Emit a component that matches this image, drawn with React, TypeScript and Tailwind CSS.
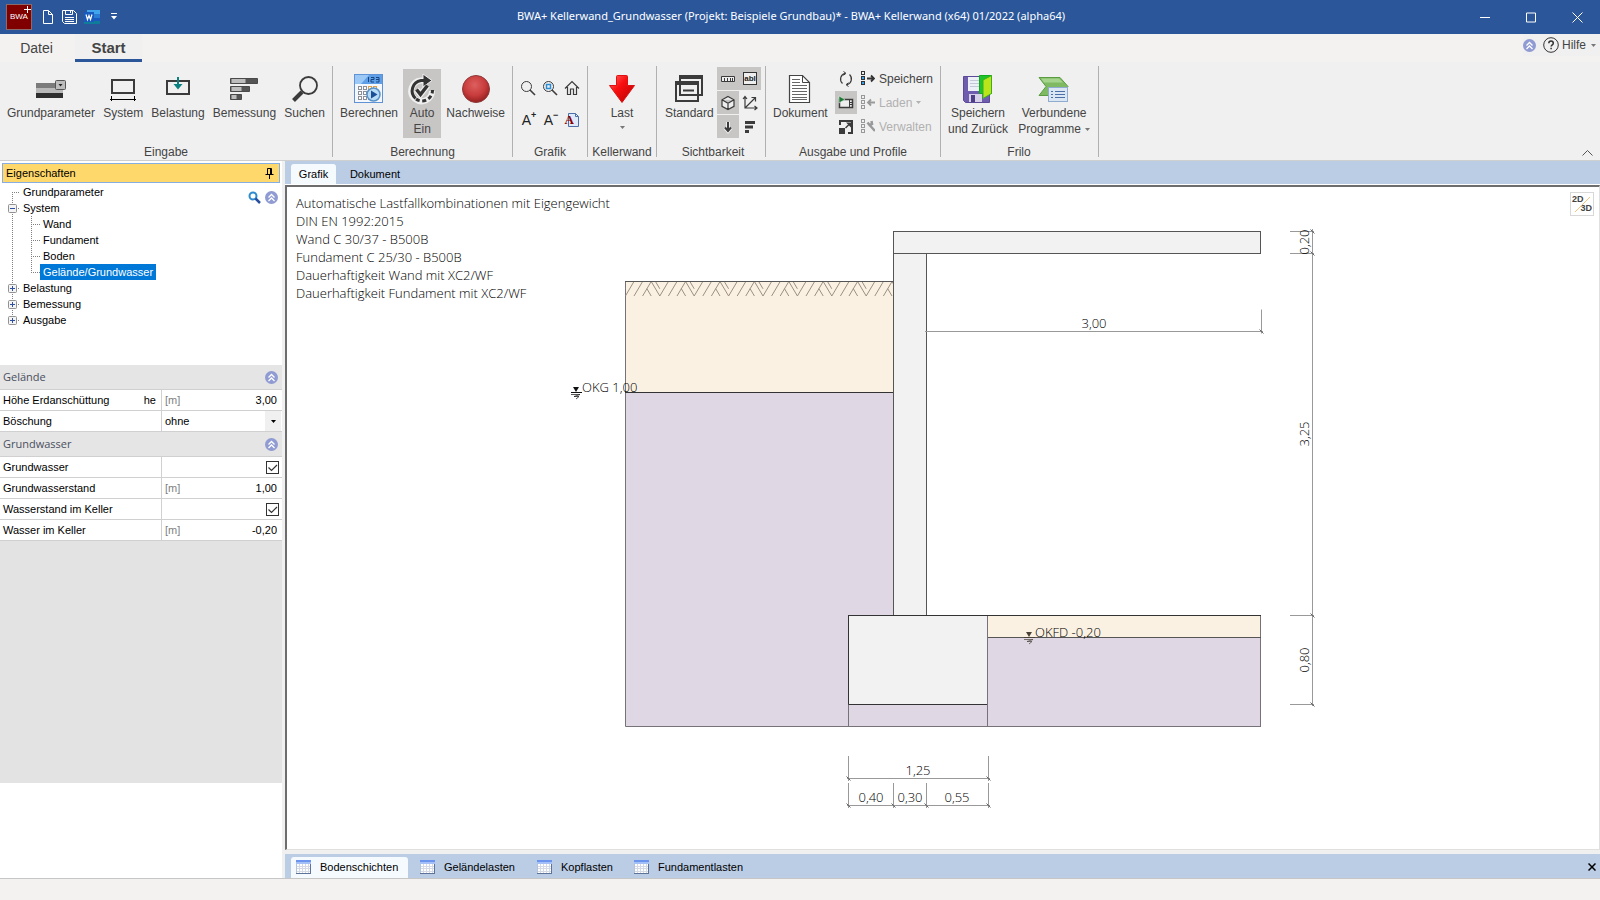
import React, { useState } from "react";

const ARIAL = "font-['Liberation_Sans',Arial,sans-serif]";
const SEGOE = "font-['Open_Sans','Noto_Sans',sans-serif]";

export default function App() {
  return (
    <div
      className={`flex h-screen flex-col overflow-hidden bg-[#f0f0f0] text-[#444] ${ARIAL}`}
    >
      <TitleBar />
      <RibbonTabs />
      <Ribbon />
      <div className="flex min-h-0 flex-1">
        <Sidebar />
        <Workspace />
      </div>
      <footer className="h-[22px] shrink-0 border-t border-[#c6c6c6] bg-[#f3f2f1]" />
    </div>
  );
}

function TitleBar() {
  return (
    <header className="flex h-[34px] shrink-0 items-center bg-[#2b579a] text-white">
      <div className="flex w-[120px] items-center pl-[6px]">
        <div className="relative flex size-[26px] items-center justify-center border border-[#8a6a6a] bg-[#800000]">
          <span className="text-[8px] leading-none">BWA</span>
          <svg
            className="absolute top-0 right-0"
            width="8"
            height="8"
            stroke="#fff"
            strokeWidth="1"
          >
            <path d="M1 4.500h7M4.500 1v7" />
          </svg>
        </div>
        <button aria-label="Neu" className="ml-[10px]">
          <svg width="12" height="16" fill="none" stroke="#fff">
            <path d="M1.500 1.500h5l4 4v9h-9zM6.500 1.500v4h4" />
          </svg>
        </button>
        <button aria-label="Speichern" className="ml-[8px]">
          <svg width="15" height="16" fill="none" stroke="#fff">
            <path d="M.5 1.500h11l3 3v10H2.500l-2-2zM3.500 1.500v4h7v-4M8.500 2v2M3 8.500h9M3 10.500h9M3 12.500h9" />
          </svg>
        </button>
        <button aria-label="Word" className="ml-[7px]">
          <svg width="16" height="16">
            <rect x="3" y="1" width="13" height="4" fill="#41a5ee" />
            <rect x="3" y="5" width="13" height="4" fill="#2b7cd3" />
            <rect x="3" y="9" width="13" height="3" fill="#185abd" />
            <rect x="0" y="12" width="16" height="3" fill="#0f7d9a" />
            <rect x="0" y="3" width="10" height="10" fill="#185abd" />
            <path
              d="M2 5.500l1.500 5L5 6.500l1.500 4 1.500-5"
              fill="none"
              stroke="#fff"
              strokeWidth="1.200"
            />
          </svg>
        </button>
        <button aria-label="Anpassen" className="ml-[11px]">
          <svg width="6" height="8" fill="#fff">
            <path d="M0 0h6v1H0zM0 3h6L3 6.500z" />
          </svg>
        </button>
      </div>
      <h1 className="flex-1 pb-[2px] text-center font-['Noto_Sans',sans-serif] text-[11px] leading-4 whitespace-nowrap">
        BWA+ Kellerwand_Grundwasser (Projekt: Beispiele Grundbau)* - BWA+
        Kellerwand (x64) 01/2022 (alpha64)
      </h1>
      <div className="flex">
        <WindowButton label="Minimieren" d="M0 5.500h10" />
        <WindowButton label="Maximieren" d="M.5 1h9v9h-9z" />
        <WindowButton label="Schließen" d="M.5.5l10 10M10.500.5l-10 10" />
      </div>
    </header>
  );
}

function WindowButton({ label, d }: { label: string; d: string }) {
  return (
    <button
      aria-label={label}
      className="flex h-[34px] w-[46px] items-center justify-center"
    >
      <svg width="11" height="11" fill="none" stroke="#fff">
        <path d={d} />
      </svg>
    </button>
  );
}

function RoundChevron() {
  return (
    <svg width="13" height="13" viewBox="0 0 13 13">
      <circle cx="6.500" cy="6.500" r="6.500" fill="#8f9bd2" />
      <path
        d="M3.500 6.500l3-3 3 3M3.500 10l3-3 3 3"
        fill="none"
        stroke="#fff"
        strokeWidth="1.300"
      />
    </svg>
  );
}

function Caret({ color = "#777" }: { color?: string }) {
  return (
    <svg width="5" height="3" fill={color}>
      <path d="M0 0h5L2.500 3z" />
    </svg>
  );
}

function RibbonTabs() {
  return (
    <nav className="flex h-7 shrink-0 bg-[#f3f2f1]">
      <button className="w-[73px] text-sm">Datei</button>
      <button className="ml-[2px] w-[67px] border-b-[3px] border-[#2b579a] bg-[#f0f0f0] pt-[3px] text-[15px] font-bold">
        Start
      </button>
      <div className="ml-auto flex h-[22px] items-center bg-[#f0f0f0] pr-1 text-xs">
        <button aria-label="Einklappen" className="mr-[7px]">
          <RoundChevron />
        </button>
        <button className="flex items-center">
          <svg width="16" height="16" fill="none" stroke="#333">
            <circle cx="8" cy="8" r="7.300" />
            <path
              d="M5.800 6.200c0-3 4.500-3 4.500 0 0 1.600-2.200 1.700-2.200 3.400M8.100 10.800v1.400"
              strokeWidth="1.500"
            />
          </svg>
          <span className="mr-[5px] ml-[3px]">Hilfe</span>
          <Caret />
        </button>
      </div>
    </nav>
  );
}

type GroupProps = {
  title: string;
  className: string;
  children: React.ReactNode;
};

function Group({ title, className, children }: GroupProps) {
  return (
    <>
      <section className={`flex flex-col ${className}`}>
        <div className="flex flex-1 items-start justify-between pt-[7px]">
          {children}
        </div>
        <h2 className="text-center leading-4 whitespace-nowrap">{title}</h2>
      </section>
      <div className="mt-1 mb-[3px] w-px bg-[#b1b1b1]" />
    </>
  );
}

type BigButtonProps = {
  icon: React.ReactNode;
  active?: boolean;
  className?: string;
  children: React.ReactNode;
};

function BigButton({ icon, active, className, children }: BigButtonProps) {
  return (
    <button
      className={`flex h-[69px] flex-col items-center pt-1 leading-4 whitespace-nowrap ${
        active ? "bg-[#c8c6c4]" : ""
      } ${className ?? ""}`}
    >
      <span className="flex h-8 items-center">{icon}</span>
      {children}
    </button>
  );
}

type SmallButtonProps = {
  label: string;
  active?: boolean;
  children: React.ReactNode;
};

function SmallButton({ label, active, children }: SmallButtonProps) {
  return (
    <button
      aria-label={label}
      className={`flex h-[23px] w-[22px] items-center justify-center ${
        active ? "bg-[#c8c6c4]" : ""
      }`}
    >
      <svg width="16" height="16" fill="none" stroke="#3b3b3b">
        {children}
      </svg>
    </button>
  );
}

function Ribbon() {
  return (
    <div className="flex h-[99px] shrink-0 border-b border-[#cfcfcf] text-xs">
      <Group title="Eingabe" className="w-[332px] px-[7px]">
        <BigButton icon={<GrundparameterIcon />}>Grundparameter</BigButton>
        <BigButton icon={<SystemIcon />}>System</BigButton>
        <BigButton icon={<BelastungIcon />}>Belastung</BigButton>
        <BigButton icon={<BemessungIcon />}>Bemessung</BigButton>
        <BigButton icon={<SuchenIcon />}>Suchen</BigButton>
      </Group>

      <Group title="Berechnung" className="w-[179px] px-[7px]">
        <BigButton icon={<BerechnenIcon />}>Berechnen</BigButton>
        <BigButton icon={<AutoIcon />} active className="w-[38px]">
          <span>Auto</span>
          <span>Ein</span>
        </BigButton>
        <BigButton icon={<NachweiseIcon />}>Nachweise</BigButton>
      </Group>

      <Group title="Grafik" className="w-[74px] px-1">
        <div className="mt-[7px] grid w-full grid-cols-3 gap-y-[9px]">
          <SmallButton label="Zoom">
            <circle cx="6.500" cy="6.500" r="5" />
            <path d="M10 10l5 5" strokeWidth="1.600" />
          </SmallButton>
          <SmallButton label="Zoom Fenster">
            <circle cx="6.500" cy="6.500" r="5" />
            <rect x="4.500" y="4.500" width="4" height="4" stroke="#2a8dd4" strokeWidth="1.500" />
            <path d="M10 10l5 5" strokeWidth="1.600" />
          </SmallButton>
          <SmallButton label="Gesamtansicht">
            <path d="M1 8.500L8 1.500l7 7M3.500 7v7.500h3V9h3v5.500h3V7" strokeWidth="1.200" />
          </SmallButton>
          <button className="flex h-[23px] w-[22px] items-center justify-center pl-[2px] text-sm leading-none text-[#222]">
            A<sup className="text-[9px] leading-none font-bold">+</sup>
          </button>
          <button className="flex h-[23px] w-[22px] items-center justify-center pl-[2px] text-sm leading-none text-[#222]">
            A<sup className="text-[9px] leading-none font-bold">−</sup>
          </button>
          <button className="flex h-[23px] w-[22px] items-center justify-center">
            <span className="relative flex">
              <svg width="15" height="16" fill="#dfe9f8" stroke="#4d6fa8">
                <path d="M3.500 1.500h7l3 3v10h-10zM10.500 1.500v3h3" />
              </svg>
              <span className="absolute top-0 left-0 font-['Liberation_Serif',serif] text-[13px] leading-4 font-bold text-[#8b0000]">
                A
              </span>
            </span>
          </button>
        </div>
      </Group>

      <Group title="Kellerwand" className="w-[68px]">
        <BigButton icon={<LastIcon />} className="w-full">
          <span>Last</span>
          <span className="mt-[5px]">
            <Caret />
          </span>
        </BigButton>
      </Group>

      <Group title="Sichtbarkeit" className="w-[108px] pr-[4px] pl-[8px]">
        <BigButton icon={<StandardIcon />}>Standard</BigButton>
        <div className="-mt-[2px] grid grid-cols-2 gap-y-px">
          <SmallButton label="Bemaßung" active>
            <path d="M1.500 5.500h13v5h-13z" fill="#eee" />
            <path d="M4.500 7v3M7.500 7v3M10.500 7v3M12.500 7v3" />
          </SmallButton>
          <button className="flex h-[23px] w-[22px] items-center justify-center bg-[#c8c6c4]">
            <span className="flex h-[13px] w-[14px] items-center justify-center border border-[#333] bg-[#eee] text-[8px] leading-none font-bold text-[#222]">
              abl
            </span>
          </button>
          <SmallButton label="3D Ansicht" active>
            <path
              d="M8 1.500l6 3.300v6.500l-6 3.300-6-3.300V4.800zM2 4.800l6 3.400 6-3.400M8 8.200v6.400"
              fill="#eee"
              strokeWidth="1.200"
            />
          </SmallButton>
          <SmallButton label="Koordinaten">
            <path d="M3 1.500v11.500h12M3 13L13 3M9.500 2.500H13.500v4M1 4l2-2.500L5 4M12.500 11l2.500 2-2.500 2" strokeWidth="1.200" />
          </SmallButton>
          <SmallButton label="Lasten" active>
            <path d="M8 3v9M5 8.500l3 3.500 3-3.500" stroke="#eee" strokeWidth="4" />
            <path d="M8 3v9M5 8.500l3 3.500 3-3.500" strokeWidth="2" />
          </SmallButton>
          <SmallButton label="Ergebnisse">
            <path d="M3 3.500h10M3 8h8M3 12.500h4" strokeWidth="3" />
          </SmallButton>
        </div>
      </Group>

      <Group title="Ausgabe und Profile" className="w-[174px] px-[7px]">
        <BigButton icon={<DokumentIcon />}>Dokument</BigButton>
        <div className="-mt-[2px] grid grid-cols-[22px_auto] items-center gap-x-1 gap-y-px">
          <SmallButton label="Aktualisieren">
            <path d="M7 2.300A6 6 0 0 0 4.500 12.500M9 13.700A6 6 0 0 0 11.500 3.500" strokeWidth="1.200" />
            <path d="M5.500.5l2.500 1.800-2.500 2M10.500 15.500L8 13.700l2.500-2" />
          </SmallButton>
          <ProfileButton mode="save">Speichern</ProfileButton>
          <SmallButton label="Film" active>
            <path d="M1.500 4.500h13v8h-13z" fill="#eee" strokeWidth="1.500" />
            <path d="M11.500 5v7M11.500 7.500h3M11.500 9.500h3" />
            <path d="M1 1v7l6-3.500z" fill="#1e7b34" stroke="#eee" strokeWidth=".5" />
          </SmallButton>
          <ProfileButton mode="load">Laden</ProfileButton>
          <SmallButton label="Vergrößern">
            <path d="M2 6V2h12v12h-4" strokeWidth="2" />
            <path d="M1 9h6v6H1zM8 3.500h5v5z" fill="#3b3b3b" stroke="none" />
            <path d="M7.500 9L11 5.500" strokeWidth="1.500" />
          </SmallButton>
          <ProfileButton mode="manage">Verwalten</ProfileButton>
        </div>
      </Group>

      <Group title="Frilo" className="w-[157px] pr-[8px] pl-[7px]">
        <BigButton icon={<SaveBackIcon />}>
          <span>Speichern</span>
          <span>und Zurück</span>
        </BigButton>
        <BigButton icon={<VerbundeneIcon />}>
          <span>Verbundene</span>
          <span className="flex items-center gap-1">
            Programme <Caret />
          </span>
        </BigButton>
      </Group>

      <button aria-label="Menüband ausblenden" className="mt-auto mr-[7px] mb-1 ml-auto">
        <svg width="11" height="6" fill="none" stroke="#555">
          <path d="M.5 5.500l5-5 5 5" />
        </svg>
      </button>
    </div>
  );
}

const profileArrows = {
  save: "M6 7.500h7M10 4.500l3 3-3 3",
  load: "M14 7.500H7M10 4.500l-3 3 3 3",
  manage: "M9 6.500l5 5.500M6.500 3.500l2 2.500 2.500-1-.5-3",
};

function ProfileButton({
  mode,
  children,
}: {
  mode: "save" | "load" | "manage";
  children: React.ReactNode;
}) {
  const enabled = mode === "save";
  const ink = enabled ? "#333" : "#999";
  return (
    <button
      disabled={!enabled}
      className={`flex h-[23px] items-center gap-1 ${
        enabled ? "" : "text-[#b1b1b1]"
      }`}
    >
      <svg width="14" height="15" stroke={ink} fill="none">
        <rect x=".5" y=".5" width="3" height="3" />
        <rect x=".5" y="5.500" width="3" height="3" fill={enabled ? "#3aa0e8" : "none"} />
        <rect x=".5" y="10.500" width="3" height="3" fill={enabled ? "#3aa0e8" : "none"} />
        <path d={profileArrows[mode]} strokeWidth={mode === "manage" ? 2.5 : 1.8} />
      </svg>
      {children}
      {mode === "load" && <Caret color="#b1b1b1" />}
    </button>
  );
}

/* ---------- ribbon icons ---------- */

function GrundparameterIcon() {
  return (
    <svg width="32" height="20">
      <rect x="1" y="4" width="27" height="5" fill="#7b7b7b" />
      <rect x="1" y="9" width="27" height="5" fill="#b9b9b9" />
      <rect x="1" y="14" width="27" height="5" fill="#2f2f2f" />
      <rect x="20.500" y="1.500" width="10" height="9" rx="1" fill="#bdbdbd" stroke="#555" />
      <path d="M23.500 5h4L25.500 7.500z" fill="#222" />
    </svg>
  );
}

function SystemIcon() {
  return (
    <svg width="28" height="24" fill="none">
      <rect x="3" y="3" width="22" height="13" stroke="#3b3b3b" strokeWidth="2" />
      <path d="M1 22.500h26M2.500 19v5M25.500 19v5" stroke="#000" />
    </svg>
  );
}

function BelastungIcon() {
  return (
    <svg width="26" height="26" fill="none" className="mb-2">
      <rect x="2" y="9" width="22" height="13" stroke="#3b3b3b" strokeWidth="2" />
      <path d="M13 5v8" stroke="#0b8080" strokeWidth="2" />
      <path d="M8.500 12h9L13 17.500z" fill="#0b8080" />
    </svg>
  );
}

function BemessungIcon() {
  return (
    <svg width="28" height="24" stroke="#4a4a4a">
      <path d="M.5 1.500h27v5H.5zM.5 9.500h19v5H.5zM.5 17.500h11v5H.5z" fill="#555" />
      <path d="M1.500 2h14v4h-14zM1.500 10h10v4h-10zM1.500 18h5v4h-5z" fill="#bdbdbd" stroke="none" />
    </svg>
  );
}

function SuchenIcon() {
  return (
    <svg width="28" height="28" fill="none" stroke="#3b3b3b">
      <circle cx="17.500" cy="10.500" r="8.500" strokeWidth="1.800" />
      <path d="M11 17l-8.500 8.500" strokeWidth="4" />
    </svg>
  );
}

function BerechnenIcon() {
  return (
    <svg width="30" height="30">
      <rect x=".5" y=".5" width="28" height="28" fill="#f4f8fd" stroke="#5f93d6" />
      <rect x="1" y="1" width="27" height="9" fill="#5f9fe8" />
      <path d="M1 1h14L7 10H1z" fill="#9cc8f5" />
      <path
        d="M14.500 3v5M17 3.500h3v2h-3v2.500h3M22 3.500h3v4.500h-3M22 5.500h3"
        fill="none"
        stroke="#17447f"
      />
      {[12, 17, 22].map((y) =>
        [4, 9, 14, 19].map((x) => (
          <rect
            key={`${x}-${y}`}
            x={x + 0.5}
            y={y + 0.5}
            width="3"
            height="3"
            fill="#fff"
            stroke={y === 12 && x > 10 ? "#e0a14a" : "#8a8f98"}
          />
        ))
      )}
      <circle cx="19.500" cy="20.500" r="6.500" fill="#b9dcf6" stroke="#5a92c8" strokeWidth="1.500" />
      <path d="M17 16.500v8l6.500-4z" fill="#1c4f95" />
    </svg>
  );
}

function AutoIcon() {
  return (
    <svg width="30" height="32" fill="none">
      <g stroke="#f0f0f0" strokeWidth="6">
        <path d="M8 26A10.500 10.500 0 0 1 14 7.500h3M8 26a10.500 10.500 0 0 0 17-8" />
        <path d="M9.500 16.500l4 5 7-9" />
      </g>
      <path d="M16 1v13l9-6.500z" fill="#333" stroke="#f0f0f0" />
      <path d="M8.500 25.500A10.500 10.500 0 0 1 14 7.500h4" stroke="#333" strokeWidth="3" />
      <path d="M9 26a10.500 10.500 0 0 0 16.500-9" stroke="#333" strokeWidth="3" strokeDasharray="4 2.500" />
      <path d="M9.500 16.500l4 5 7-9" stroke="#333" strokeWidth="3.500" />
    </svg>
  );
}

function NachweiseIcon() {
  return (
    <svg width="30" height="30">
      <defs>
        <radialGradient id="ball" cx=".45" cy=".35" r=".65">
          <stop offset="0" stopColor="#de5f5f" />
          <stop offset=".6" stopColor="#c83c3c" />
          <stop offset="1" stopColor="#962020" />
        </radialGradient>
      </defs>
      <circle cx="15" cy="15" r="13.500" fill="url(#ball)" stroke="#8f3a3a" />
    </svg>
  );
}

function LastIcon() {
  return (
    <svg width="28" height="30">
      <defs>
        <linearGradient id="arrow" x1="0" y1="0" x2="1" y2="1">
          <stop offset="0" stopColor="#ff6a6a" />
          <stop offset=".4" stopColor="#fa0f0f" />
          <stop offset="1" stopColor="#b00000" />
        </linearGradient>
      </defs>
      <path
        d="M8.500 2.500q0-1 1-1h9q1 0 1 1v9h7L14 28.500 1.500 11.500h7z"
        fill="url(#arrow)"
        stroke="#d11"
      />
    </svg>
  );
}

function StandardIcon() {
  return (
    <svg width="30" height="30" fill="none" stroke="#3b3b3b">
      <rect x="6" y="3" width="22" height="18" strokeWidth="2" />
      <path d="M5 3h24" strokeWidth="4" />
      <rect x="2" y="9" width="22" height="18" strokeWidth="2" />
      <path d="M1 9h24" strokeWidth="4" />
      <path d="M9 16.500h11" strokeWidth="2" />
    </svg>
  );
}

function DokumentIcon() {
  return (
    <svg width="24" height="30" fill="none" stroke="#444">
      <path d="M1.500 1.500h13l7 7v20h-20z" fill="#fff" strokeWidth="1.200" />
      <path d="M14.500 1.500v7h7" />
      <path
        d="M4 5.500h8M4 8.500h8M4 11.500h15M4 14.500h15M4 17.500h15M4 20.500h15M4 23.500h15M4 25.500h15"
        stroke="#666"
      />
    </svg>
  );
}

function SaveBackIcon() {
  return (
    <svg width="32" height="30">
      <path d="M1.500 2.500h26v26h-24l-2-2z" fill="#6f5cae" stroke="#5c4a98" />
      <rect x="6" y="3" width="15" height="14" fill="#eef0f8" />
      <path d="M8 6.500h10M8 9.500h10M8 12.500h10" stroke="#c3c8d8" />
      <rect x="7" y="20" width="13" height="8" fill="#d5d0e8" />
      <rect x="9" y="21" width="4" height="7" fill="#4f3d86" />
      <path d="M17.500 1.500h12v18h-12z" fill="#1fc42c" stroke="#12a91f" />
      <path d="M21 6l8.500-4.500v18L21 24.500z" fill="#b9e51a" stroke="#35b120" />
    </svg>
  );
}

function VerbundeneIcon() {
  return (
    <svg width="32" height="28">
      <path d="M1 2.500h21l8 9-8 9H1l7-9z" fill="#7fba63" stroke="#5b9c43" />
      <path d="M3 3.500h18l4 4H6z" fill="#a5d48d" />
      <rect x="10.500" y="12.500" width="19" height="14" fill="#dbe6f4" stroke="#8fabd0" />
      <path d="M13 16.500h2M13 19.500h2M13 22.500h2M17 16.500h10M17 19.500h10M17 22.500h10" stroke="#4d6fa8" />
    </svg>
  );
}

/* ---------- left panel ---------- */

function Sidebar() {
  return (
    <aside className="flex w-[282px] shrink-0 flex-col bg-white text-[11px] text-black">
      <div className="mx-[2px] mt-[2px] flex h-5 shrink-0 items-center justify-between border border-[#86aee0] bg-[#ffd86c] pr-[5px] pl-[3px]">
        Eigenschaften
        <button aria-label="Anheften">
          <svg width="9" height="11" stroke="#000" fill="none">
            <path d="M2.500 6V.5h4V6M5.500 1v5M.5 6.500h8M4.500 7v4" />
          </svg>
        </button>
      </div>
      <div className="flex h-[182px] shrink-0 justify-between pt-px">
        <Tree />
        <div className="flex h-[18px] items-center gap-1 pt-[8px] pr-1">
          <button aria-label="Suchen">
            <svg width="13" height="13" fill="none">
              <circle cx="5" cy="5" r="3.500" stroke="#2f8bd0" strokeWidth="2" />
              <path d="M7.500 7.500L12 12" stroke="#2a4fa0" strokeWidth="2.500" />
            </svg>
          </button>
          <button aria-label="Alle einklappen">
            <RoundChevron />
          </button>
        </div>
      </div>
      <form className="h-[418px] shrink-0 bg-[#e3e3e3]">
        <SectionHeader>Gelände</SectionHeader>
        <NumberRow id="he" label="Höhe Erdanschüttung" symbol="he" value="3,00" />
        <PropertyRow id="boeschung" label="Böschung">
          <select
            id="boeschung"
            className="h-full min-w-0 flex-1 appearance-none bg-white"
          >
            <option>ohne</option>
          </select>
          <span className="-mr-[4px] flex h-full w-4 items-center justify-center bg-[#f0f0f0]">
            <Caret color="#000" />
          </span>
        </PropertyRow>
        <SectionHeader>Grundwasser</SectionHeader>
        <CheckRow id="gw" label="Grundwasser" />
        <NumberRow id="gwstand" label="Grundwasserstand" value="1,00" />
        <CheckRow id="keller" label="Wasserstand im Keller" />
        <NumberRow id="wasser" label="Wasser im Keller" value="-0,20" />
      </form>
    </aside>
  );
}

function Tree() {
  return (
    <ul className="leading-4">
      <TreeRow label="Grundparameter" first />
      <li>
        <TreeRow label="System" state="open" as="div" />
        <ul>
          <TreeRow label="Wand" child />
          <TreeRow label="Fundament" child />
          <TreeRow label="Boden" child />
          <TreeRow label="Gelände/Grundwasser" child selected />
        </ul>
      </li>
      <TreeRow label="Belastung" state="closed" />
      <TreeRow label="Bemessung" state="closed" />
      <TreeRow label="Ausgabe" state="closed" last />
    </ul>
  );
}

type TreeRowProps = {
  label: string;
  as?: "li" | "div";
  state?: "open" | "closed";
  child?: boolean;
  selected?: boolean;
  first?: boolean;
  last?: boolean;
};

function TreeRow(props: TreeRowProps) {
  const { label, as: Tag = "li", state, child, selected, first, last } = props;
  return (
    <Tag className="flex h-4">
      <svg
        width={child ? 40 : 20}
        height="16"
        fill="none"
        stroke="#808080"
        strokeDasharray="1 1"
      >
        <path d={`M12.500 ${first ? 8 : 0}V${last ? 8 : 16}`} />
        {child ? (
          <path d={`M31.500 0V${selected ? 8 : 16}M31 8.500h9`} />
        ) : (
          <path d="M12 8.500h9" />
        )}
        {state && (
          <g strokeDasharray="none">
            <rect x="8.500" y="4.500" width="8" height="8" rx="1" fill="#f4f4f4" stroke="#919191" />
            <path
              d={state === "open" ? "M10 8.500h5" : "M10 8.500h5M12.500 6v5"}
              stroke="#2f4fa0"
            />
          </g>
        )}
      </svg>
      <button
        className={`px-[3px] ${selected ? "bg-[#0078d7] text-white" : ""}`}
      >
        {label}
      </button>
    </Tag>
  );
}

function SectionHeader({ children }: { children: string }) {
  return (
    <div
      className={`flex h-[25px] items-center justify-between border-b border-[#d0d0d0] bg-[#e5e5e5] pr-1 pl-[3px] text-[11px] text-[#4a4f60] ${SEGOE}`}
    >
      {children}
      <button type="button" aria-label={`${children} einklappen`}>
        <RoundChevron />
      </button>
    </div>
  );
}

type RowProps = {
  id: string;
  label: string;
  symbol?: string;
  children: React.ReactNode;
};

function PropertyRow({ id, label, symbol, children }: RowProps) {
  return (
    <div className="flex h-[21px] border-b border-[#d0d0d0] bg-white">
      <label
        htmlFor={id}
        className="flex w-[162px] items-center justify-between border-r border-[#d0d0d0] pr-[5px] pl-[3px]"
      >
        {label}
        {symbol && <span>{symbol}</span>}
      </label>
      <div className="flex min-w-0 flex-1 items-center pr-[5px] pl-[3px]">
        {children}
      </div>
    </div>
  );
}

function NumberRow(props: Omit<RowProps, "children"> & { value: string }) {
  const { value, ...row } = props;
  return (
    <PropertyRow {...row}>
      <span className="text-[#808080]">[m]</span>
      <input
        id={row.id}
        defaultValue={value}
        className="min-w-0 flex-1 text-right outline-none"
      />
    </PropertyRow>
  );
}

function CheckRow({ id, label }: { id: string; label: string }) {
  const [checked, setChecked] = useState(true);
  return (
    <PropertyRow id={id} label={label}>
      <span className="relative -mr-[2px] ml-auto size-[13px]">
        <input
          id={id}
          type="checkbox"
          checked={checked}
          onChange={() => setChecked(!checked)}
          className="block size-[13px] appearance-none border border-[#333] bg-white"
        />
        {checked && (
          <svg
            className="pointer-events-none absolute inset-0"
            width="13"
            height="13"
            fill="none"
            stroke="#333"
            strokeWidth="1.200"
          >
            <path d="M2.500 6.500l3 3 5.500-5.500" />
          </svg>
        )}
      </span>
    </PropertyRow>
  );
}

/* ---------- right side ---------- */

const infoLines = [
  "Automatische Lastfallkombinationen mit Eigengewicht",
  "DIN EN 1992:2015",
  "Wand C 30/37 - B500B",
  "Fundament C 25/30 - B500B",
  "Dauerhaftigkeit Wand mit XC2/WF",
  "Dauerhaftigkeit Fundament mit XC2/WF",
];

function Workspace() {
  return (
    <main className="ml-[3px] flex min-w-0 flex-1 flex-col text-[11px] text-black">
      <nav className="flex h-6 shrink-0 border-b border-white bg-[#bbcde5] pt-[3px] pl-[6px]">
        <button className="w-[45px] rounded-t-[3px] bg-[#f5faff]">Grafik</button>
        <button className="w-[78px]">Dokument</button>
      </nav>
      <div className="relative min-h-0 flex-1 border-t-2 border-r border-b border-l-2 border-t-[#6d6d6d] border-r-[#e0e0e0] border-b-[#e0e0e0] border-l-[#6d6d6d] bg-white">
        <Drawing />
        <div
          className={`absolute top-[7px] left-[9px] text-[13px] leading-[18px] font-light ${SEGOE}`}
        >
          {infoLines.map((line) => (
            <p key={line}>{line}</p>
          ))}
        </div>
        <button
          aria-label="2D/3D"
          className="absolute top-[5px] right-[5px] flex size-6 flex-col justify-between border border-[#d8d8d8] bg-white px-px py-[2px] text-[9px] leading-[9px] font-bold text-[#444]"
        >
          <span className="self-start">2D</span>
          <span className="self-end">3D</span>
          <svg className="absolute inset-0" width="22" height="22">
            <path d="M4 19L19 4" stroke="#f5c47a" />
          </svg>
        </button>
      </div>
      <nav className="mt-1 flex h-6 shrink-0 items-stretch bg-[#bbcde5] pt-[3px] pl-[6px]">
        <BottomTab active className="w-[117px]">
          Bodenschichten
        </BottomTab>
        <BottomTab className="ml-[7px] w-[117px]">Geländelasten</BottomTab>
        <BottomTab className="w-[97px]">Kopflasten</BottomTab>
        <BottomTab>Fundamentlasten</BottomTab>
        <button aria-label="Schließen" className="mr-[4px] mb-[2px] ml-auto">
          <svg width="8" height="8" stroke="#000" strokeWidth="1.500">
            <path d="M.5.5l7 7M7.500.5l-7 7" />
          </svg>
        </button>
      </nav>
    </main>
  );
}

function BottomTab({
  active,
  className,
  children,
}: {
  active?: boolean;
  className?: string;
  children: string;
}) {
  return (
    <button
      className={`flex items-center gap-[9px] rounded-t-[3px] pb-px pl-[5px] whitespace-nowrap ${
        active ? "bg-[#f5faff]" : ""
      } ${className ?? ""}`}
    >
      <svg width="15" height="14">
        <rect x=".5" y=".5" width="14" height="13" fill="#fff" stroke="#b4c2dc" />
        <rect x="0" y="0" width="15" height="2" fill="#6a94ee" />
        <rect x="0" y="2" width="15" height="2" fill="#a4c0f6" />
        <path d="M3.500 4v9M6.500 4v9M9.500 4v9M12.500 4v9M1 6.500h13M1 8.500h13M1 11.500h13" stroke="#d3dae6" />
        <path d="M0 13.500h15M14.500 4v9" stroke="#5d739c" />
      </svg>
      {children}
    </button>
  );
}

const HATCH = 34.4;
const hatchStarts = Array.from({ length: 9 }, (_, i) => 599.6 + i * HATCH);

function Hatch({ x }: { x: number }) {
  const s = HATCH / 4;
  return (
    <path
      d={`M${x} 296l${s} -14.500M${x + s} 296l${s} -14.500l${s} 14.500l${s} -14.500
        M${x + 1.5 * s} 288.700l${s / 2} 7.300M${x + 3 * s - s / 2} 281.500l${s / 2} 7.300`}
    />
  );
}

function DimText({
  x,
  y,
  vertical,
  children,
}: {
  x: number;
  y: number;
  vertical?: boolean;
  children: string;
}) {
  return (
    <text
      x={x}
      y={y}
      textAnchor="middle"
      transform={vertical ? `rotate(-90 ${x} ${y})` : undefined}
    >
      {children}
    </text>
  );
}

function WaterLevel({ x, y, color }: { x: number; y: number; color: string }) {
  return (
    <g stroke={color} fill="none">
      <path d={`M${x - 3} ${y - 5}h6l-3 5z`} fill={color} stroke="none" />
      <path d={`M${x - 5} ${y + 0.5}h11`} />
      <path
        d={`M${x - 5} ${y + 2.5}h9l-6 2h5l-3 2.500`}
        strokeWidth=".7"
      />
    </g>
  );
}

function Drawing() {
  return (
    <svg
      viewBox="287 187 1311 662"
      preserveAspectRatio="xMinYMin meet"
      className="block h-full w-full"
      fill="none"
      strokeWidth="1"
    >
      <defs>
        <clipPath id="soil">
          <rect x="625.500" y="281" width="268" height="16" />
        </clipPath>
      </defs>

      {/* soil and ground water */}
      <g stroke="#77727a">
        <rect x="625.500" y="392.500" width="223" height="334" fill="#dfd7e3" stroke="none" />
        <rect x="848" y="392.500" width="45.500" height="223" fill="#dfd7e3" stroke="none" />
        <rect x="848.500" y="704.500" width="139" height="22" fill="#dfd7e3" />
        <rect x="987.500" y="637.500" width="273" height="89" fill="#dfd7e3" />
        <rect x="987.500" y="615.500" width="273" height="22" fill="#fbf1e3" />
        <rect x="625.500" y="281.500" width="268" height="111" fill="#fbf1e3" />
        <path d="M625.500 392v334.500h223" />
      </g>
      <path d="M625 392.500h268" stroke="#333" />
      <path d="M988 637.500h273" stroke="#555" />
      <g clipPath="url(#soil)" stroke="#9a8f82">
        {hatchStarts.map((x) => (
          <Hatch key={x} x={x} />
        ))}
      </g>
      <path d="M625 281.500h268" stroke="#555" />

      {/* concrete */}
      <g fill="#f2f2f2" stroke="#555">
        <rect x="893.500" y="231.500" width="367" height="22" />
        <rect x="893.500" y="253.500" width="33" height="362" />
        <rect x="848.500" y="615.500" width="139" height="89" stroke="none" />
      </g>
      <path d="M848.500 615v89.500h139" stroke="#333" />
      <path d="M987.500 615v90" stroke="#77727a" />
      <path d="M848 615.500h413" stroke="#333" />

      {/* dimension lines */}
      <g stroke="#999">
        <path d="M925 331.500h338M1261.500 309.500v24" />
        <path d="M1312.500 229v477M1290 231.500h24M1290 253.500h24M1290 615.500h24M1290 704.500h24" />
        <path d="M847 778.500h143M848.500 756v25M988.500 756v25" />
        <path d="M847 805.500h143M848.500 783v25M893.500 783v25M926.500 783v25M988.500 783v25" />
      </g>
      <g stroke="#666">
        <path d="M1259.500 329.500l4 4M846.500 776.500l4 4M986.500 776.500l4 4M846.500 803.500l4 4M891.500 803.500l4 4M924.500 803.500l4 4M986.500 803.500l4 4" />
        <path d="M1310.500 229.500l4 4M1310.500 251.500l4 4M1310.500 613.500l4 4M1310.500 702.500l4 4" />
      </g>

      <WaterLevel x={576} y={392} color="#111" />
      <WaterLevel x={1029} y={637} color="#4a4236" />

      <g className={`text-[13px] font-light ${SEGOE}`} fill="#000">
        <text x="582" y="392">OKG 1,00</text>
        <text x="1035" y="637">OKFD -0,20</text>
        <DimText x={1094} y={328}>3,00</DimText>
        <DimText x={918} y={775}>1,25</DimText>
        <DimText x={871} y={802}>0,40</DimText>
        <DimText x={910} y={802}>0,30</DimText>
        <DimText x={957} y={802}>0,55</DimText>
        <DimText x={1309} y={242} vertical>0,20</DimText>
        <DimText x={1309} y={434} vertical>3,25</DimText>
        <DimText x={1309} y={660} vertical>0,80</DimText>
      </g>
    </svg>
  );
}
